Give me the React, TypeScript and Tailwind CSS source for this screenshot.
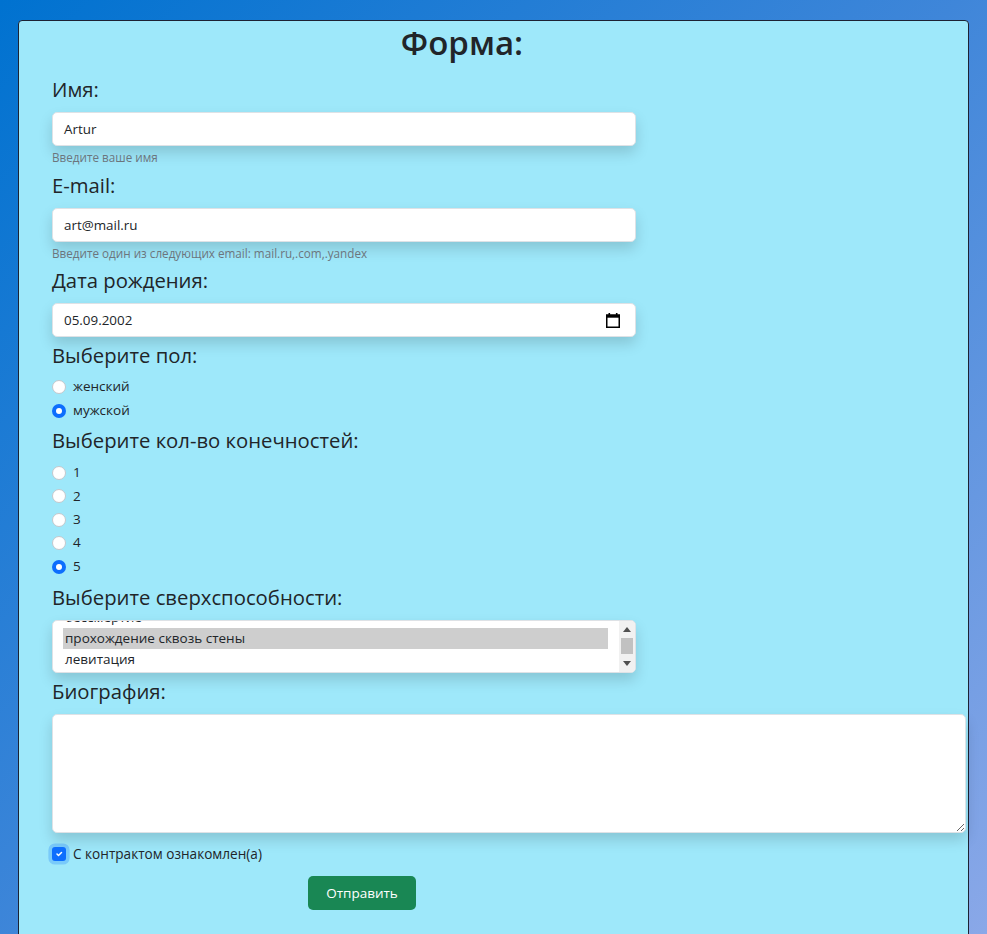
import React from "react";

function Radio({ checked, label }: { checked?: boolean; label: string }) {
  return (
    <div className="flex items-center h-[23.4px]">
      {checked ? (
        <span className="w-[14px] h-[14px] rounded-full bg-[#0d6efd] flex items-center justify-center">
          <span className="w-[6px] h-[6px] rounded-full bg-white" />
        </span>
      ) : (
        <span className="w-[14px] h-[14px] rounded-full bg-white border border-[#c4c8cc]" />
      )}
      <span className="ml-[7px] text-[13.5px] leading-none text-[#212529]">{label}</span>
    </div>
  );
}

function Label({ children, mt }: { children: React.ReactNode; mt: string }) {
  return <div className={`${mt} h-[32px] text-[20.3px] leading-[32px] text-[#212529]`}>{children}</div>;
}

const inputCls =
  "mt-[7px] w-[584px] h-[34px] bg-white border border-[#dee2e6] rounded-[5px] shadow-[0_7px_14px_rgba(0,0,0,0.15)] flex items-center px-[11px] text-[13.4px] text-[#212529]";

export default function App() {
  return (
    <div className="w-full h-[934px] overflow-hidden bg-[linear-gradient(135deg,#0072d0_0%,#3f86d9_50%,#8aa8e8_100%)] pt-[20px] pl-[18px] font-['Open_Sans',sans-serif]">
      <div className="w-[951px] h-[930px] bg-[#9ee8fa] border border-[#1c2233] rounded-t-[4px] pl-[33px]">
        <h1 className="mt-[2px] w-[820px] text-center text-[33px] font-semibold leading-[40px] text-[#212529]">Форма:</h1>

        <Label mt="mt-[10px]">Имя:</Label>
        <div className={inputCls}>Artur</div>
        <div className="mt-[2px] h-[19px] text-[11.7px] leading-[19px] text-[#6c757d]">Введите ваше имя</div>

        <Label mt="mt-[2px]">E-mail:</Label>
        <div className={inputCls}>art@mail.ru</div>
        <div className="mt-[2px] h-[19px] text-[11.7px] leading-[19px] text-[#6c757d]">
          Введите один из следующих email: mail.ru,.com,.yandex
        </div>

        <Label mt="mt-[1px]">Дата рождения:</Label>
        <div className={`${inputCls} justify-between pr-[15px]`}>
          <span>05.09.2002</span>
          <svg width="14" height="15" viewBox="0 0 14 15">
            <rect x="2.5" y="0" width="1.6" height="3" fill="#000" />
            <rect x="9.9" y="0" width="1.6" height="3" fill="#000" />
            <rect x="0.75" y="2.25" width="12.5" height="12" fill="none" stroke="#000" strokeWidth="1.5" />
            <rect x="0" y="1.5" width="14" height="3.2" fill="#000" />
          </svg>
        </div>

        <Label mt="mt-[1.5px]">Выберите пол:</Label>
        <div className="mt-[5px]">
          <Radio label="женский" />
          <Radio label="мужской" checked />
        </div>

        <Label mt="mt-[2px]">Выберите кол-во конечностей:</Label>
        <div className="mt-[5px]">
          <Radio label="1" />
          <Radio label="2" />
          <Radio label="3" />
          <Radio label="4" />
          <Radio label="5" checked />
        </div>

        <Label mt="mt-[3px]">Выберите сверхспособности:</Label>
        <div className="mt-[7px] w-[584px] h-[53px] bg-white border border-[#dee2e6] rounded-[5px] shadow-[0_7px_14px_rgba(0,0,0,0.15)] flex overflow-hidden">
          <div className="flex-1 overflow-hidden pl-[10px] pr-[11px]">
            <div className="-mt-[14px] text-[13.5px] text-[#212529]">
              <div className="h-[21px] leading-[21px] px-[2px]">бессмертие</div>
              <div className="h-[21px] leading-[21px] px-[2px] bg-[#cecece]">прохождение сквозь стены</div>
              <div className="h-[21px] leading-[21px] px-[2px]">левитация</div>
            </div>
          </div>
          <div className="w-[16px] h-full bg-[#f1f1f1] flex flex-col items-center">
            <div className="h-[17px] w-full flex items-center justify-center">
              <svg width="8" height="5" viewBox="0 0 8 5">
                <polygon points="4,0 8,5 0,5" fill="#505050" />
              </svg>
            </div>
            <div className="h-[16px] w-[12px] bg-[#c1c1c1]" />
            <div className="h-[18px] w-full flex items-center justify-center">
              <svg width="8" height="5" viewBox="0 0 8 5">
                <polygon points="0,0 8,0 4,5" fill="#505050" />
              </svg>
            </div>
          </div>
        </div>

        <Label mt="mt-[2px]">Биография:</Label>
        <textarea
          className="mt-[7px] block w-[914px] h-[119px] bg-white border border-[#dee2e6] rounded-[5px] shadow-[0_7px_14px_rgba(0,0,0,0.15)] outline-none"
          defaultValue=""
        />

        <div className="mt-[9px] h-[23.4px] flex items-center">
          <span className="w-[14px] h-[14px] rounded-[3px] bg-[#0d6efd] shadow-[0_0_0_3.6px_rgba(13,110,253,0.25)] flex items-center justify-center">
            <svg width="10" height="10" viewBox="0 0 20 20">
              <path d="M6 10l3 3l6-6" fill="none" stroke="#fff" strokeWidth="3" strokeLinecap="round" strokeLinejoin="round" />
            </svg>
          </span>
          <span className="ml-[7px] text-[13.6px] leading-none text-[#212529]">С контрактом ознакомлен(а)</span>
        </div>

        <button className="mt-[10px] ml-[256px] w-[108px] h-[34px] bg-[#198754] text-white text-[13.5px] rounded-[5px]">
          Отправить
        </button>
      </div>
    </div>
  );
}
